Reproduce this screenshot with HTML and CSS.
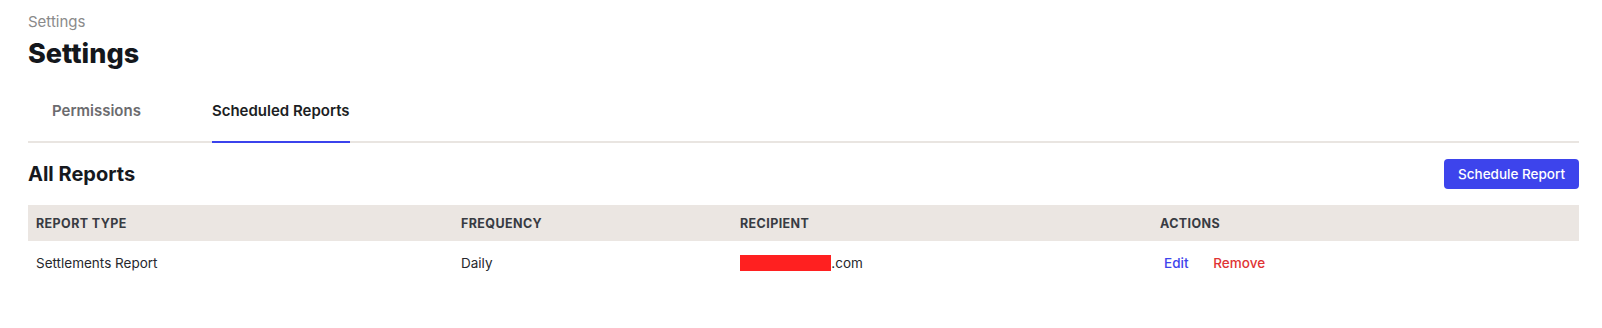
FILE: index.html
```html
<!DOCTYPE html>
<html lang="en">

<head>
    <meta charset="UTF-8" />
    <meta name="viewport" content="width=device-width, initial-scale=1" />
    <title>Settings</title>
    <link rel="stylesheet" href="styles.css">
</head>

<body>
    <div class="page">
        <div class="breadcrumb">Settings</div>
        <h1 class="title">Settings</h1>

        <div class="tabs">
            <a class="tab">Permissions</a>
            <a class="tab active">Scheduled Reports</a>
        </div>

        <div class="section-head">
            <h2>All Reports</h2>
            <button class="btn-primary">Schedule Report</button>
        </div>

        <table class="reports">
            <thead>
                <tr>
                    <th class="col-type">Report Type</th>
                    <th class="col-freq">Frequency</th>
                    <th class="col-recipient">Recipient</th>
                    <th>Actions</th>
                </tr>
            </thead>
            <tbody>
                <tr>
                    <td>Settlements Report</td>
                    <td>Daily</td>
                    <td><span class="redacted">john99@gmail</span>.com</td>
                    <td class="actions">
                        <a class="link edit">Edit</a>
                        <a class="link remove">Remove</a>
                    </td>
                </tr>
            </tbody>
        </table>
    </div>
</body>

</html>
```

FILE: styles.css
```css
body {
    margin: 0;
    font-family: Inter, 'Noto Sans', sans-serif;
    color: #1f2126;
    background: #fff;
}

.page {
    padding: 0 23px 0 28px;
}

.breadcrumb {
    margin-top: 12px;
    font-size: 15px;
    line-height: 20px;
    color: #8a8a8a;
}

.title {
    margin: 6px 0 0;
    font-size: 27px;
    line-height: 32px;
    font-weight: 800;
    color: #14171c;
}

.tabs {
    display: flex;
    gap: 71px;
    margin-top: 31px;
    padding-left: 24px;
    border-bottom: 2px solid #e9e5e1;
}

.tab {
    font-size: 15px;
    line-height: 20px;
    font-weight: 600;
    color: #6b6b6e;
    padding-bottom: 20px;
    margin-bottom: -2px;
    border-bottom: 2px solid transparent;
    cursor: pointer;
}

.tab.active {
    color: #1c1e23;
    border-bottom-color: #3b43ec;
}

.section-head {
    display: flex;
    justify-content: space-between;
    align-items: center;
    margin-top: 16px;
}

.section-head h2 {
    margin: 0;
    font-size: 20px;
    font-weight: 700;
    color: #16191e;
}

.btn-primary {
    height: 30px;
    padding: 0 14px;
    border: none;
    border-radius: 4px;
    background: #3d44ec;
    color: #fff;
    font-family: inherit;
    font-size: 13.5px;
    font-weight: 500;
    cursor: pointer;
}

.reports {
    width: 100%;
    margin-top: 16px;
    border-collapse: collapse;
    font-size: 13.5px;
}

.reports th {
    height: 36px;
    padding: 0 8px;
    background: #ebe6e2;
    text-align: left;
    font-size: 12.5px;
    font-weight: 700;
    text-transform: uppercase;
    letter-spacing: 0.4px;
    color: #383b42;
}

.reports td {
    height: 44px;
    padding: 0 8px;
    color: #26282d;
}

.col-type {
    width: 409px;
}

.col-freq {
    width: 263px;
}

.col-recipient {
    width: 404px;
}

.redacted {
    background: #ff2020;
    color: transparent;
}

.actions {
    white-space: nowrap;
}

.link {
    font-weight: 500;
    cursor: pointer;
    padding: 0 4px;
}

.link.edit {
    color: #3d44ec;
    margin-right: 13px;
}

.link.remove {
    color: #e03434;
}
```
